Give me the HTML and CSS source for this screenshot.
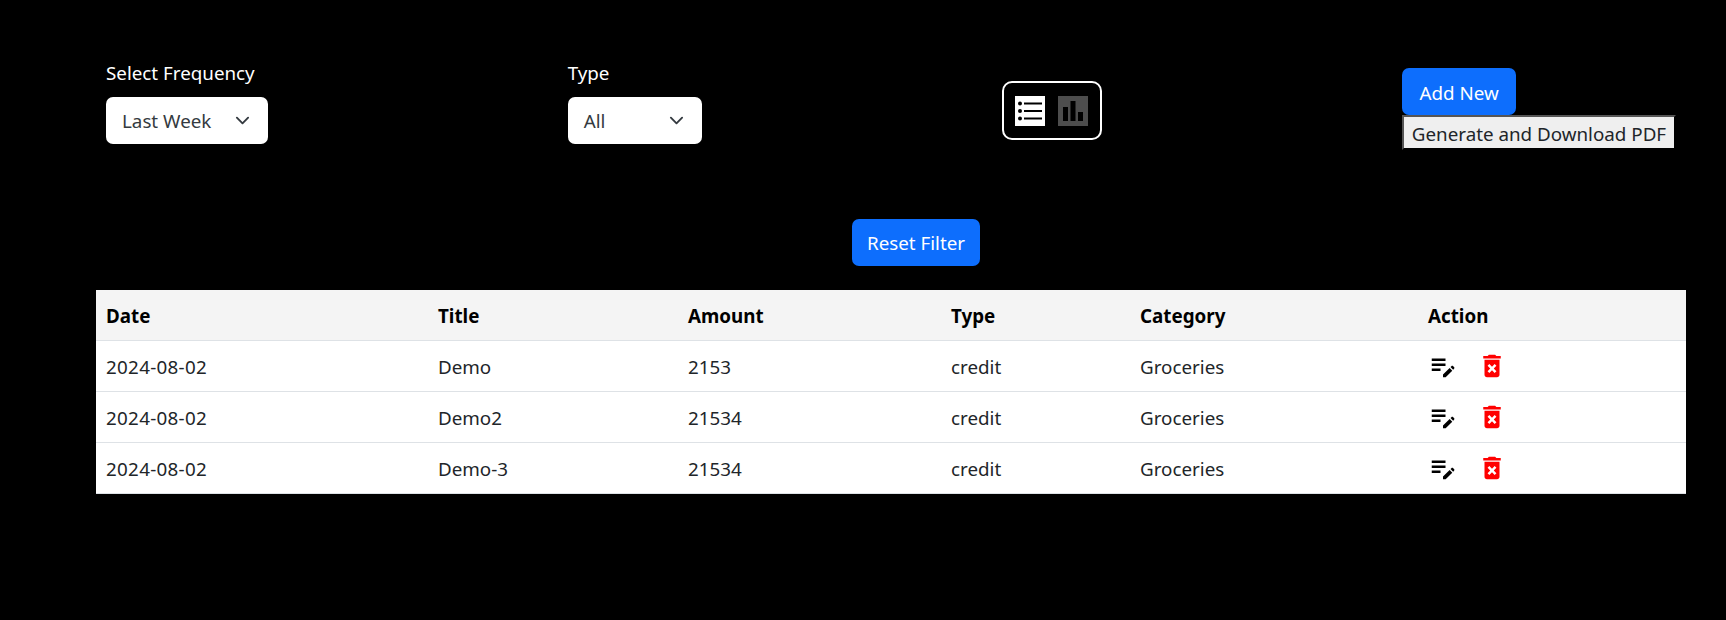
FILE: index.html
```html
<!DOCTYPE html>
<html lang="en">
<head>
    <meta charset="UTF-8">
    <meta name="viewport" content="width=device-width, initial-scale=1.0">
    <title>Transactions</title>
    <link rel="stylesheet" href="styles.css">
</head>
<body>
    <div class="container">
        <div class="filters">
            <div class="filter">
                <label class="filter-label">Select Frequency</label>
                <div class="select select-frequency">
                    <span>Last Week</span>
                    <svg class="chevron" viewBox="0 0 16 16"><path d="M2 5l6 6 6-6" fill="none" stroke="#343a40" stroke-width="2" stroke-linecap="round" stroke-linejoin="round"/></svg>
                </div>
            </div>
            <div class="filter">
                <label class="filter-label">Type</label>
                <div class="select select-type">
                    <span>All</span>
                    <svg class="chevron" viewBox="0 0 16 16"><path d="M2 5l6 6 6-6" fill="none" stroke="#343a40" stroke-width="2" stroke-linecap="round" stroke-linejoin="round"/></svg>
                </div>
            </div>
            <div class="view-switch">
                <svg class="view-icon" viewBox="0 0 30 30">
                    <rect width="30" height="30" fill="#fff"/>
                    <circle cx="5" cy="7.5" r="2" fill="#000"/>
                    <circle cx="5" cy="15" r="2" fill="#000"/>
                    <circle cx="5" cy="22.5" r="2" fill="#000"/>
                    <rect x="9" y="6.5" width="18" height="2" fill="#000"/>
                    <rect x="9" y="14" width="18" height="2" fill="#000"/>
                    <rect x="9" y="21.5" width="18" height="2" fill="#000"/>
                </svg>
                <svg class="view-icon view-icon-off" viewBox="0 0 30 30">
                    <rect width="30" height="30" fill="#fff"/>
                    <rect x="5" y="11" width="5" height="14" fill="#000"/>
                    <rect x="12.5" y="5" width="5" height="20" fill="#000"/>
                    <rect x="20" y="16" width="5" height="9" fill="#000"/>
                </svg>
            </div>
            <div class="actions">
                <button class="btn btn-add">Add New</button>
                <button class="pdf-btn">Generate and Download PDF</button>
            </div>
        </div>

        <div class="reset-row">
            <button class="btn btn-reset">Reset Filter</button>
        </div>

        <table class="records">
            <thead>
                <tr>
                    <th class="col-date">Date</th>
                    <th class="col-title">Title</th>
                    <th class="col-amount">Amount</th>
                    <th class="col-type">Type</th>
                    <th class="col-category">Category</th>
                    <th>Action</th>
                </tr>
            </thead>
            <tbody>
                <tr>
                    <td class="date-cell">2024-08-02</td>
                    <td>Demo</td>
                    <td>2153</td>
                    <td>credit</td>
                    <td>Groceries</td>
                    <td>
                        <div class="row-actions">
                            <svg class="icon" viewBox="0 0 24 24"><path d="M3 10h11v2H3zM3 6h11v2H3zM3 14h7v2H3zM18.01 12.87l.71-.71c.39-.39 1.02-.39 1.41 0l.71.71c.39.39.39 1.02 0 1.41l-.71.71zM17.3 13.58l-5.3 5.3V21h2.12l5.3-5.3z"/></svg>
                            <svg class="icon icon-delete" viewBox="0 0 24 24"><path d="M6 19c0 1.1.9 2 2 2h8c1.1 0 2-.9 2-2V7H6v12zm2.46-7.12 1.41-1.41L12 12.59l2.12-2.12 1.41 1.41L13.41 14l2.12 2.12-1.41 1.41L12 15.41l-2.12 2.12-1.41-1.41L10.59 14l-2.13-2.12zM15.5 4l-1-1h-5l-1 1H5v2h14V4z"/></svg>
                        </div>
                    </td>
                </tr>
                <tr>
                    <td class="date-cell">2024-08-02</td>
                    <td>Demo2</td>
                    <td>21534</td>
                    <td>credit</td>
                    <td>Groceries</td>
                    <td>
                        <div class="row-actions">
                            <svg class="icon" viewBox="0 0 24 24"><path d="M3 10h11v2H3zM3 6h11v2H3zM3 14h7v2H3zM18.01 12.87l.71-.71c.39-.39 1.02-.39 1.41 0l.71.71c.39.39.39 1.02 0 1.41l-.71.71zM17.3 13.58l-5.3 5.3V21h2.12l5.3-5.3z"/></svg>
                            <svg class="icon icon-delete" viewBox="0 0 24 24"><path d="M6 19c0 1.1.9 2 2 2h8c1.1 0 2-.9 2-2V7H6v12zm2.46-7.12 1.41-1.41L12 12.59l2.12-2.12 1.41 1.41L13.41 14l2.12 2.12-1.41 1.41L12 15.41l-2.12 2.12-1.41-1.41L10.59 14l-2.13-2.12zM15.5 4l-1-1h-5l-1 1H5v2h14V4z"/></svg>
                        </div>
                    </td>
                </tr>
                <tr>
                    <td class="date-cell">2024-08-02</td>
                    <td>Demo-3</td>
                    <td>21534</td>
                    <td>credit</td>
                    <td>Groceries</td>
                    <td>
                        <div class="row-actions">
                            <svg class="icon" viewBox="0 0 24 24"><path d="M3 10h11v2H3zM3 6h11v2H3zM3 14h7v2H3zM18.01 12.87l.71-.71c.39-.39 1.02-.39 1.41 0l.71.71c.39.39.39 1.02 0 1.41l-.71.71zM17.3 13.58l-5.3 5.3V21h2.12l5.3-5.3z"/></svg>
                            <svg class="icon icon-delete" viewBox="0 0 24 24"><path d="M6 19c0 1.1.9 2 2 2h8c1.1 0 2-.9 2-2V7H6v12zm2.46-7.12 1.41-1.41L12 12.59l2.12-2.12 1.41 1.41L13.41 14l2.12 2.12-1.41 1.41L12 15.41l-2.12 2.12-1.41-1.41L10.59 14l-2.13-2.12zM15.5 4l-1-1h-5l-1 1H5v2h14V4z"/></svg>
                        </div>
                    </td>
                </tr>
            </tbody>
        </table>
    </div>
</body>
</html>
```

FILE: styles.css
```css
* {
    box-sizing: border-box;
}

html, body {
    height: 100%;
}

body {
    margin: 0;
    background-color: #000;
    color: #212529;
    font-family: "Noto Sans", Arial, sans-serif;
    font-size: 18.8px;
}

.container {
    padding: 60px 40px 0 96px;
}

.filters {
    display: flex;
    justify-content: space-between;
    align-items: flex-end;
    padding: 0 10px;
    height: 84px;
}

.filter-label {
    display: block;
    color: #fff;
    margin-bottom: 11px;
    line-height: 26px;
}

.select {
    display: flex;
    align-items: center;
    justify-content: space-between;
    height: 47px;
    padding: 0 18px 0 16px;
    background-color: #fff;
    border-radius: 7px;
    color: #343a40;
}

.select-frequency {
    width: 162px;
}

.select-type {
    width: 134px;
    margin-right: 1px;
}

.chevron {
    width: 15px;
    height: 15px;
}

.view-switch {
    display: flex;
    gap: 13px;
    align-items: center;
    width: 100px;
    height: 59px;
    padding: 0 11px;
    margin-bottom: 4px;
    border: 2px solid #fff;
    border-radius: 10px;
}

.view-icon {
    width: 30px;
    height: 30px;
}

.view-icon-off {
    opacity: 0.3;
}

.actions {
    display: flex;
    flex-direction: column;
    align-items: flex-start;
    margin-bottom: -6px;
}

.btn {
    height: 47px;
    padding: 0 16px;
    border: 0;
    border-radius: 7px;
    background-color: #0d6efd;
    color: #fff;
    font: inherit;
}

.btn-add {
    padding: 2px 17.5px 0;
}

.btn-reset {
    padding: 0 15px;
}

.pdf-btn {
    width: 274px;
    height: 35px;
    padding: 2px 0 0;
    border-style: solid;
    border-width: 2px;
    border-color: #555 #000 #000 #555;
    background-color: #efefef;
    color: #212529;
    font: inherit;
    white-space: nowrap;
}

.reset-row {
    padding: 75px 0 24px 756px;
}

.records {
    width: 1590px;
    border-collapse: collapse;
    background-color: #fff;
    table-layout: fixed;
}

.records th,
.records td {
    padding: 2px 10px 0;
    height: 51px;
    text-align: left;
    border-bottom: 1px solid #dee2e6;
}

.records th {
    height: 50px;
    background-color: #f4f4f4;
    color: #000;
    font-weight: 700;
}

.date-cell {
    letter-spacing: 0.3px;
}

.col-date { width: 332px; }
.col-title { width: 250px; }
.col-amount { width: 263px; }
.col-type { width: 189px; }
.col-category { width: 288px; }

.row-actions {
    display: flex;
    gap: 19px;
    margin-top: -2px;
}

.icon {
    width: 30px;
    height: 30px;
    fill: #000;
}

.icon-delete {
    fill: #ff0000;
}
```
